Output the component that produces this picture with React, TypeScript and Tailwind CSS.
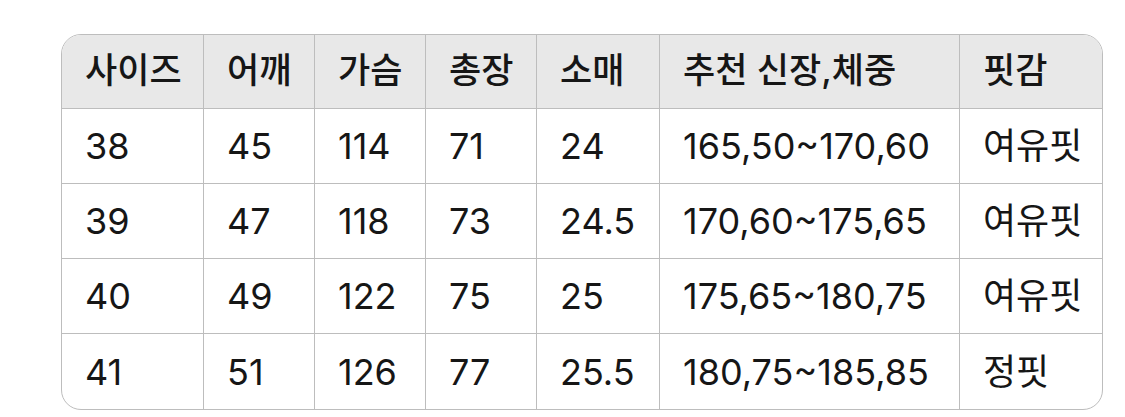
const headers = ["사이즈", "어깨", "가슴", "총장", "소매", "추천 신장,체중", "핏감"];

const rows = [
  ["38", "45", "114", "71", "24", "165,50~170,60", "여유핏"],
  ["39", "47", "118", "73", "24.5", "170,60~175,65", "여유핏"],
  ["40", "49", "122", "75", "25", "175,65~180,75", "여유핏"],
  ["41", "51", "126", "77", "25.5", "180,75~185,85", "정핏"],
];

function Cell({ text, last, bottom, head }: { text: string; last: boolean; bottom: boolean; head?: boolean }) {
  return (
    <div
      className={
        "flex items-center pl-[23px] border-[#bdbdbd] " +
        (last ? "" : "border-r ") +
        (bottom ? "" : "border-b ") +
        (head ? "h-[74px] bg-[#e8e8e8] font-medium text-[35px] pb-[2px]" : "h-[75px] text-[36px]")
      }
    >
      {text}
    </div>
  );
}

export default function App() {
  return (
    <main className="w-full h-screen bg-white pt-[34px] pl-[61px]">
      <div
        className="w-[1042px] rounded-[20px] border border-[#bdbdbd] overflow-hidden grid grid-cols-[142px_111px_111px_111px_123px_300px_142px] text-[#161616] leading-none"
        style={{ fontFamily: '"Inter", "Noto Sans CJK KR", sans-serif' }}
      >
        {headers.map((h, i) => (
          <Cell key={h} text={h} head last={i === headers.length - 1} bottom={false} />
        ))}
        {rows.map((r, ri) =>
          r.map((c, ci) => (
            <Cell
              key={ri + "-" + ci}
              text={c}
              last={ci === r.length - 1}
              bottom={ri === rows.length - 1}
            />
          ))
        )}
      </div>
    </main>
  );
}
